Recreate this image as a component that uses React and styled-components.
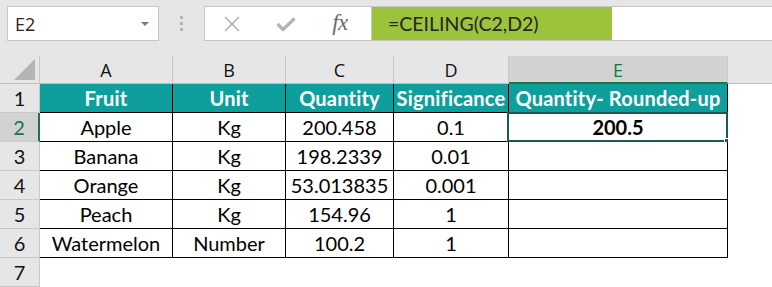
import React from "react";
import styled, { createGlobalStyle } from "styled-components";

const Global = createGlobalStyle`
  html, body { margin: 0; padding: 0; background: #ffffff; }
  * { box-sizing: border-box; }
`;

const Page = styled.div`
  width: 772px;
  height: 287px;
  overflow: hidden;
  background: #ffffff;
  font-family: Lato, "Liberation Sans", sans-serif;
`;

const Toolbar = styled.div`
  height: 56px;
  background: #e6e6e6;
  display: flex;
  align-items: flex-start;
  padding-top: 6px;
  padding-left: 7px;
`;

const NameBox = styled.div`
  width: 152px;
  height: 35px;
  background: #fff;
  border: 1px solid #c6c6c6;
  display: flex;
  align-items: center;
  justify-content: space-between;
  padding: 0 9px 0 7px;
  font-family: "Open Sans", sans-serif;
  font-size: 18px;
  color: #262626;
`;

const Caret = styled.span`
  width: 0;
  height: 0;
  border-left: 4px solid transparent;
  border-right: 4px solid transparent;
  border-top: 4px solid #7a7a7a;
`;

const Grip = styled.div`
  width: 45px;
  height: 35px;
  display: flex;
  flex-direction: column;
  align-items: center;
  justify-content: center;
  gap: 3px;
`;

const Dot = styled.span`
  width: 3px;
  height: 3px;
  background: #b4b4b4;
`;

const ButtonBox = styled.div`
  width: 168px;
  height: 35px;
  background: #fff;
  border: 1px solid #c6c6c6;
  display: grid;
  grid-template-columns: 54px 54px 54px;
  align-items: center;
  justify-items: center;
`;

const Fx = styled.span`
  font-family: "Liberation Serif", serif;
  font-style: italic;
  font-size: 23px;
  line-height: 1;
  color: #6a6a6a;
  letter-spacing: -0.5px;
  margin-bottom: 2px;
`;

const FormulaBox = styled.div`
  flex: 1;
  height: 35px;
  background: #fff;
  border: 1px solid #c6c6c6;
  border-right: none;
  margin-left: -1px;
  display: flex;
`;

const FormulaText = styled.div`
  width: 240px;
  background: #9bc33c;
  padding-left: 16px;
  display: flex;
  align-items: center;
  font-size: 19.5px;
  color: #262626;
`;

const Grid = styled.div`
  display: grid;
  grid-template-columns: 40px 133px 113px 108px 115px 219px 1fr;
`;

const ColHead = styled.div`
  height: 28px;
  background: ${(p) => (p.$active ? "#d2d2d2" : "#e6e6e6")};
  border-right: 1px solid #c8c8c8;
  border-bottom: ${(p) => (p.$active ? "2px solid #217346" : "1px solid #bdbdbd")};
  display: flex;
  align-items: center;
  justify-content: center;
  padding-top: ${(p) => (p.$active ? "1px" : "0")};
  font-family: "Open Sans", sans-serif;
  font-size: 18px;
  color: ${(p) => (p.$active ? "#217346" : "#111")};
  ${(p) => p.$blank && "border-right: none;"}
`;

const Corner = styled.div`
  height: 28px;
  background: #e6e6e6;
  border-right: 1px solid #c8c8c8;
  border-bottom: 1px solid #bdbdbd;
  display: flex;
  align-items: flex-end;
  justify-content: flex-end;
  padding: 0 4px 3px 0;
`;

const RowHead = styled.div`
  height: 29px;
  background: ${(p) => (p.$active ? "#d2d2d2" : "#e6e6e6")};
  border-right: ${(p) => (p.$active ? "2px solid #217346" : "1px solid #c8c8c8")};
  border-bottom: 1px solid #c8c8c8;
  display: flex;
  align-items: center;
  justify-content: center;
  font-size: 20px;
  color: ${(p) => (p.$active ? "#217346" : "#111")};
`;

const Cell = styled.div`
  position: relative;
  height: 29px;
  display: flex;
  align-items: center;
  justify-content: center;
  font-size: 20px;
  white-space: nowrap;
  color: #000;
  background: ${(p) => (p.$head ? "#0e9f9d" : "#fff")};
  ${(p) => p.$head && "color: #fff; font-weight: 700; letter-spacing: 0.2px;"}
  ${(p) => p.$bold && "font-weight: 700;"}
  border-right: ${(p) => (p.$plain ? "none" : "1px solid #000")};
  border-bottom: ${(p) => (p.$plain ? "none" : "1px solid #000")};
`;

const Selection = styled.div`
  position: absolute;
  left: -2px;
  top: -1px;
  right: -1px;
  bottom: -1px;
  border: 2px solid #1f5753;
  pointer-events: none;
`;

const Handle = styled.span`
  position: absolute;
  right: -4px;
  bottom: -4px;
  width: 6px;
  height: 6px;
  background: #1f5753;
  border: 1px solid #fff;
`;

const cols = ["A", "B", "C", "D", "E"];
const header = ["Fruit", "Unit", "Quantity", "Significance", "Quantity- Rounded-up"];
const rows = [
  ["Apple", "Kg", "200.458", "0.1", "200.5"],
  ["Banana", "Kg", "198.2339", "0.01", ""],
  ["Orange", "Kg", "53.013835", "0.001", ""],
  ["Peach", "Kg", "154.96", "1", ""],
  ["Watermelon", "Number", "100.2", "1", ""],
];

function XIcon() {
  return (
    <svg width="18" height="18" viewBox="0 0 18 18">
      <path d="M2 2 L16 16 M16 2 L2 16" stroke="#b3b3b3" strokeWidth="1.6" fill="none" />
    </svg>
  );
}

function CheckIcon() {
  return (
    <svg width="20" height="16" viewBox="0 0 20 16">
      <path d="M1.5 8 L7 13.5 L18.5 2.5" stroke="#b3b3b3" strokeWidth="3.2" fill="none" />
    </svg>
  );
}

function CornerTriangle() {
  return (
    <svg width="21" height="21" viewBox="0 0 21 21">
      <polygon points="21,0 21,21 0,21" fill="#b4b4b4" />
    </svg>
  );
}

export default function App() {
  return (
    <Page>
      <Global />
      <Toolbar>
        <NameBox>
          <span>E2</span>
          <Caret />
        </NameBox>
        <Grip>
          <Dot />
          <Dot />
          <Dot />
        </Grip>
        <ButtonBox>
          <XIcon />
          <CheckIcon />
          <Fx>fx</Fx>
        </ButtonBox>
        <FormulaBox>
          <FormulaText>=CEILING(C2,D2)</FormulaText>
        </FormulaBox>
      </Toolbar>
      <Grid>
        <Corner>
          <CornerTriangle />
        </Corner>
        {cols.map((c) => (
          <ColHead key={c} $active={c === "E"}>
            {c}
          </ColHead>
        ))}
        <ColHead $blank />

        <RowHead>1</RowHead>
        {header.map((h, i) => (
          <Cell key={i} $head>
            {h}
          </Cell>
        ))}
        <Cell $plain />

        {rows.map((r, ri) => (
          <React.Fragment key={ri}>
            <RowHead $active={ri === 0}>{ri + 2}</RowHead>
            {r.map((v, ci) => (
              <Cell key={ci} $bold={ri === 0 && ci === 4}>
                {v}
                {ri === 0 && ci === 4 && (
                  <Selection>
                    <Handle />
                  </Selection>
                )}
              </Cell>
            ))}
            <Cell $plain />
          </React.Fragment>
        ))}

        <RowHead>7</RowHead>
        <Cell $plain />
        <Cell $plain />
        <Cell $plain />
        <Cell $plain />
        <Cell $plain />
        <Cell $plain />
      </Grid>
    </Page>
  );
}
